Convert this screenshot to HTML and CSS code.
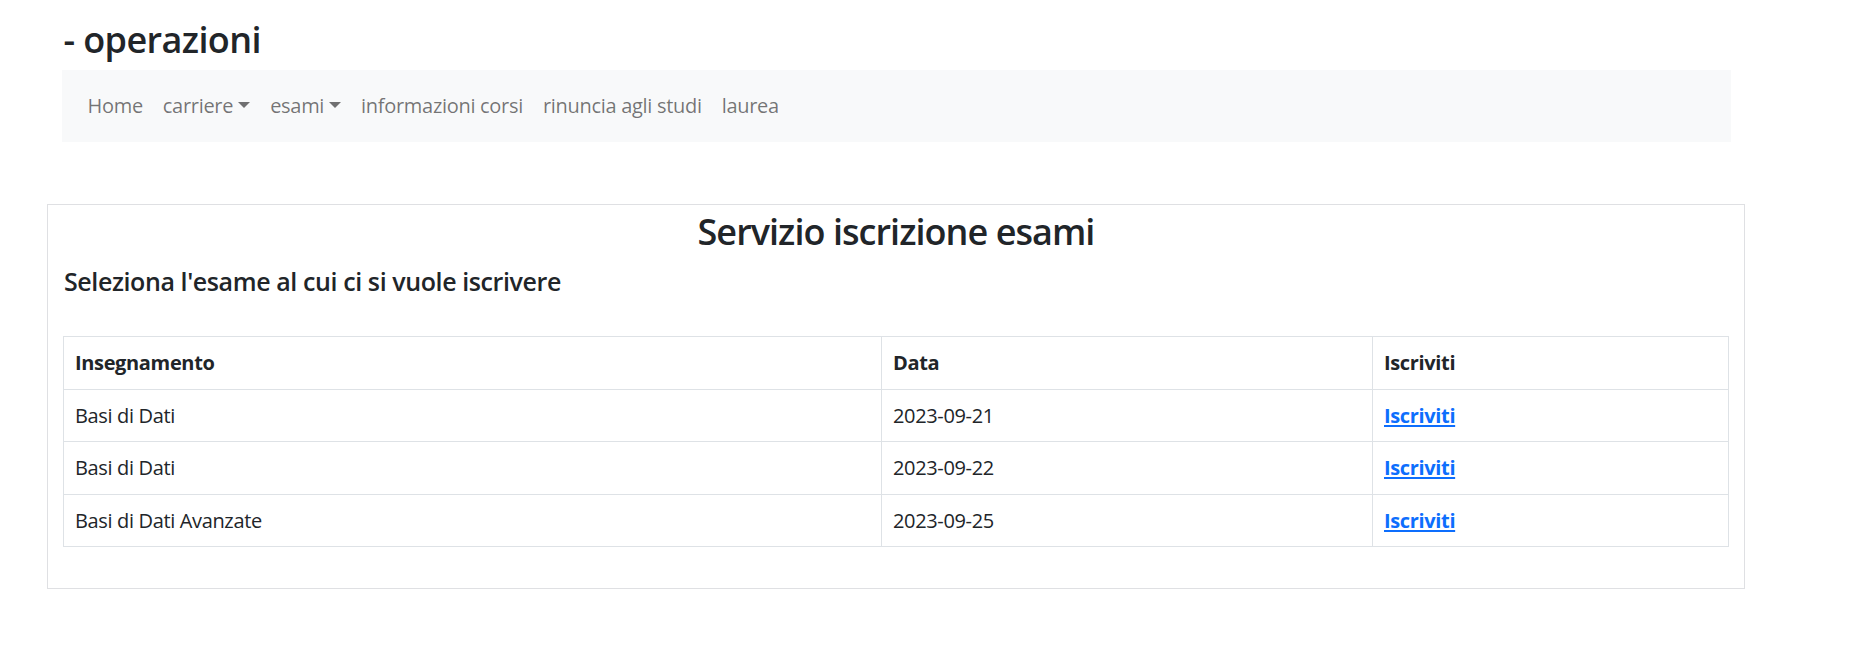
FILE: index.html
```html
<!DOCTYPE html>
<html lang="it">
<head>
<meta charset="utf-8">
<title>Servizio iscrizione esami</title>
<link rel="stylesheet" href="styles.css">
</head>
<body>
<div class="page">
  <header class="top">
    <h1 class="app-title">- operazioni</h1>
    <nav class="navbar">
      <ul class="nav">
        <li><a class="nav-link" href="#">Home</a></li>
        <li><a class="nav-link dropdown" href="#">carriere</a></li>
        <li><a class="nav-link dropdown" href="#">esami</a></li>
        <li><a class="nav-link" href="#">informazioni corsi</a></li>
        <li><a class="nav-link" href="#">rinuncia agli studi</a></li>
        <li><a class="nav-link" href="#">laurea</a></li>
      </ul>
    </nav>
  </header>

  <section class="card">
    <h2 class="card-title">Servizio iscrizione esami</h2>
    <h5 class="card-subtitle">Seleziona l'esame al cui ci si vuole iscrivere</h5>
    <table class="exams">
      <colgroup>
        <col class="col-subject">
        <col class="col-date">
        <col class="col-action">
      </colgroup>
      <thead>
        <tr><th>Insegnamento</th><th>Data</th><th>Iscriviti</th></tr>
      </thead>
      <tbody>
        <tr><td>Basi di Dati</td><td>2023-09-21</td><td><a class="enroll" href="#">Iscriviti</a></td></tr>
        <tr><td>Basi di Dati</td><td>2023-09-22</td><td><a class="enroll" href="#">Iscriviti</a></td></tr>
        <tr><td>Basi di Dati Avanzate</td><td>2023-09-25</td><td><a class="enroll" href="#">Iscriviti</a></td></tr>
      </tbody>
    </table>
  </section>
</div>
</body>
</html>
```

FILE: styles.css
```css
* { box-sizing: border-box; }

html, body {
  margin: 0;
  padding: 0;
  background: #ffffff;
}

body {
  font-family: "Open Sans", "Noto Sans", sans-serif;
  font-size: 20px;
  line-height: 1.5;
  color: #212529;
}

.page {
  width: 1792px;
  display: flex;
  flex-direction: column;
  align-items: center;
}

.top {
  width: 1669px;
  padding-top: 18px;
}

.app-title {
  margin: 0 0 9px 2px;
  font-size: 36px;
  line-height: 1.2;
  font-weight: 600;
  letter-spacing: -0.6px;
}

.navbar {
  background: #f8f9fa;
  padding: 11px 16px;
}

.nav {
  list-style: none;
  margin: 0;
  padding: 0;
  display: flex;
}

.nav-link {
  display: block;
  padding: 10px 10px;
  line-height: 30px;
  color: rgba(0, 0, 0, 0.55);
  text-decoration: none;
  letter-spacing: -0.3px;
}

.dropdown::after {
  content: "";
  display: inline-block;
  margin-left: 5px;
  vertical-align: 5px;
  border-top: 6px solid;
  border-left: 6px solid transparent;
  border-right: 6px solid transparent;
  border-bottom: 0;
}

.card {
  width: 1698px;
  margin-top: 62px;
  border: 1px solid #dfe0e3;
  padding: 5px 15px 41px;
}

.card-title {
  margin: 0;
  text-align: center;
  font-size: 36px;
  line-height: 1.2;
  font-weight: 600;
  letter-spacing: -0.95px;
}

.card-subtitle {
  margin: 13px 0 40px 1px;
  font-size: 25px;
  line-height: 1.2;
  font-weight: 600;
  letter-spacing: -0.4px;
}

.exams {
  width: 100%;
  border-collapse: collapse;
  table-layout: fixed;
}

.col-subject { width: 818px; }
.col-date { width: 491px; }
.col-action { width: auto; }

.exams th,
.exams td {
  border: 1px solid #dee2e6;
  padding: 10px 11px;
  line-height: 31.5px;
  text-align: left;
  letter-spacing: -0.35px;
}

.exams th {
  font-weight: 700;
}

.enroll {
  color: #0d6efd;
  font-weight: 700;
  text-decoration: underline;
  text-underline-offset: 2px;
}
```
